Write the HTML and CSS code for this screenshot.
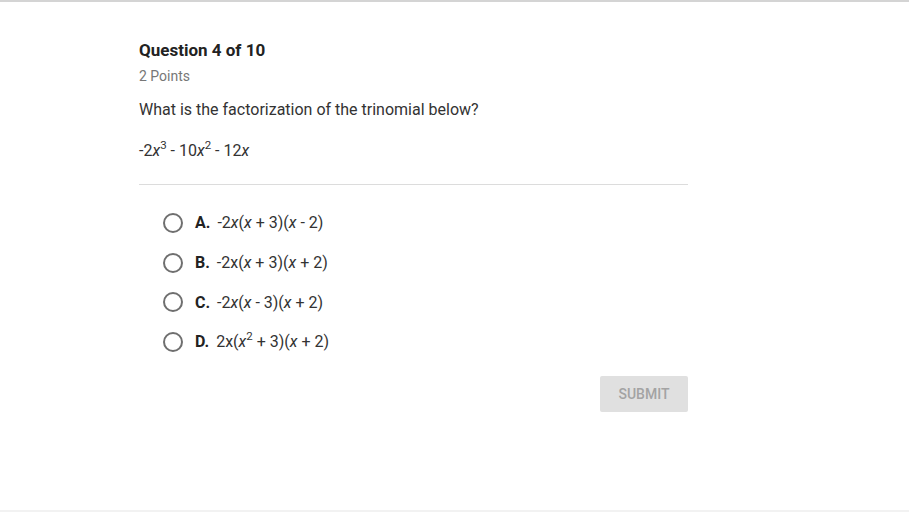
FILE: index.html
```html
<!DOCTYPE html>
<html lang="en">
<head>
  <meta charset="UTF-8">
  <title>Question 4 of 10</title>
  <link rel="stylesheet" href="styles.css">
</head>
<body>
  <div id="quiz">
    <div class="q-header">
      <h2 class="q-title">Question 4 of 10</h2>
      <div class="q-points">2 Points</div>
    </div>

    <p class="q-text">What is the factorization of the trinomial below?</p>
    <p class="q-expr">-2<i>x</i><sup>3</sup> - 10<i>x</i><sup>2</sup> - 12<i>x</i></p>

    <div class="divider"></div>

    <div class="answers">
      <label class="answer">
        <span class="radio"></span>
        <b>A.</b>
        <span>-2<i>x</i>(<i>x</i> + 3)(<i>x</i> - 2)</span>
      </label>
      <label class="answer">
        <span class="radio"></span>
        <b>B.</b>
        <span>-2x(<i>x</i> + 3)(<i>x</i> + 2)</span>
      </label>
      <label class="answer">
        <span class="radio"></span>
        <b>C.</b>
        <span>-2<i>x</i>(<i>x</i> - 3)(<i>x</i> + 2)</span>
      </label>
      <label class="answer">
        <span class="radio"></span>
        <b>D.</b>
        <span>2x(<i>x</i><sup>2</sup> + 3)(<i>x</i> + 2)</span>
      </label>
    </div>

    <div class="actions">
      <button class="submit-btn" disabled>SUBMIT</button>
    </div>
  </div>
</body>
</html>
```

FILE: styles.css
```css
body {
  margin: 0;
  padding: 0;
  height: 512px;
  box-sizing: border-box;
  background: #fff;
  color: #333;
  font-family: Roboto, "Liberation Sans", sans-serif;
  border-top: 2px solid #d4d4d4;
  border-bottom: 2px solid #f2f2f2;
  overflow: hidden;
}

#quiz {
  width: 549px;
  margin-left: 139px;
  padding-top: 38px;
}

.q-title {
  margin: 0;
  font-size: 17px;
  font-weight: bold;
  color: #222;
  line-height: 20px;
}

.q-points {
  margin-top: 7px;
  font-size: 14px;
  color: #777;
  line-height: 18px;
}

.q-text {
  margin: 15px 0 0;
  font-size: 16px;
  line-height: 20px;
  color: #333;
}

.q-expr {
  margin: 21px 0 0;
  font-size: 16px;
  line-height: 20px;
  color: #333;
}

sup {
  font-size: 11.5px;
  line-height: 0;
  vertical-align: 7px;
}

.divider {
  height: 1px;
  background: #dcdcdc;
  margin-top: 23px;
}

.answers {
  display: flex;
  flex-direction: column;
  padding: 18px 0 0 24px;
}

.answer {
  display: flex;
  align-items: center;
  gap: 7px;
  height: 39.7px;
  font-size: 16px;
  color: #333;
}

.answer b {
  color: #222;
  font-size: 16px;
}

.radio {
  width: 16px;
  height: 16px;
  border: 2px solid #6f6f6f;
  border-radius: 50%;
  margin-right: 5px;
}

.actions {
  display: flex;
  justify-content: flex-end;
  margin-top: 14px;
}

.submit-btn {
  width: 88px;
  height: 36px;
  border: none;
  border-radius: 2px;
  background: #e0e0e0;
  color: #a3a3a3;
  font-family: Roboto, "Liberation Sans", sans-serif;
  font-size: 14px;
  font-weight: 500;
}
```
